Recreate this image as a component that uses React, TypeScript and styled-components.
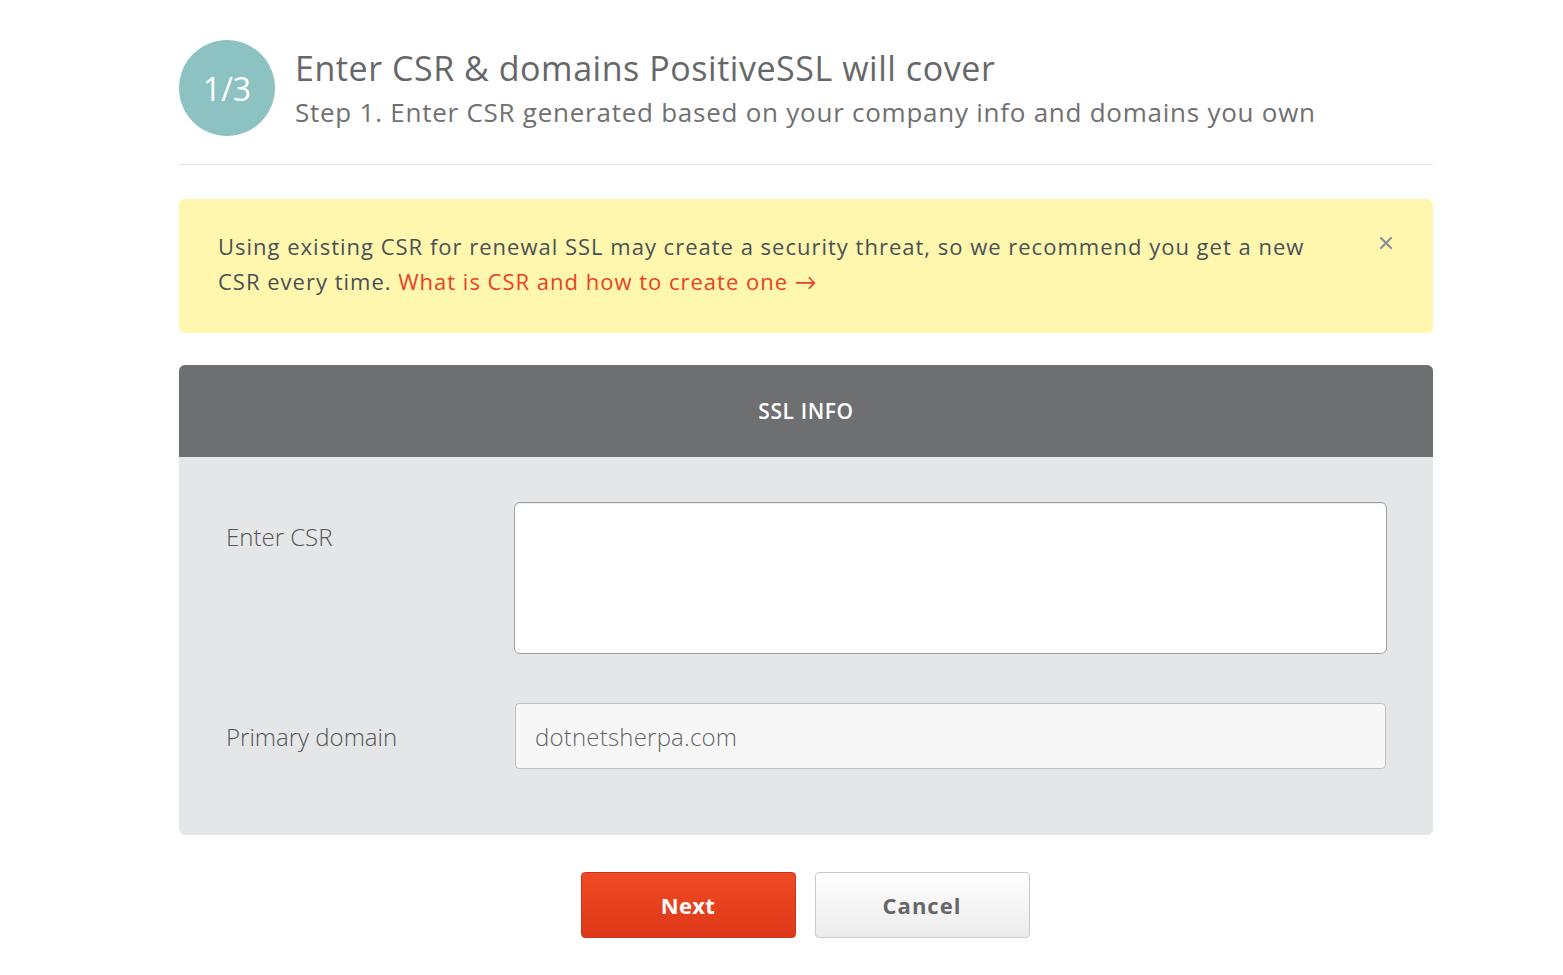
import React from "react";
import styled, { createGlobalStyle } from "styled-components";

const Global = createGlobalStyle`
  html, body { margin: 0; padding: 0; background: #fff; }
  body { font-family: "Open Sans", Lato, sans-serif; color: #666; }
  * { box-sizing: border-box; }
`;

const Page = styled.div`
  width: 1254px;
  margin: 0 0 0 179px;
  padding-top: 40px;
`;

const Header = styled.header`
  display: flex;
  align-items: center;
  gap: 20px;
  padding-bottom: 28px;
  border-bottom: 1px solid #e6e6e6;
`;

const StepCircle = styled.div`
  width: 96px;
  height: 96px;
  border-radius: 50%;
  background: #8cc2c2;
  color: #fff;
  display: flex;
  align-items: center;
  justify-content: center;
  font-size: 32px;
  flex-shrink: 0;
`;

const HeadText = styled.div`
  display: flex;
  flex-direction: column;
`;

const Title = styled.h1`
  margin: 0;
  font-size: 34px;
  font-weight: 400;
  color: #666769;
  line-height: 42px;
  letter-spacing: 0.55px;
`;

const Subtitle = styled.p`
  margin: 6px 0 0;
  font-size: 26px;
  font-weight: 400;
  color: #707070;
  line-height: 34px;
  letter-spacing: 0.75px;
`;

const Alert = styled.div`
  position: relative;
  margin-top: 34px;
  background: #fef7ad;
  border-radius: 6px;
  padding: 30px 120px 34px 39px;
  font-size: 22px;
  line-height: 35px;
  letter-spacing: 1px;
  color: #4b5057;
`;

const AlertLink = styled.a`
  color: #ea4124;
  text-decoration: none;
`;

const Close = styled.button`
  position: absolute;
  top: 36px;
  right: 39px;
  border: 0;
  background: none;
  padding: 0;
  width: 16px;
  height: 16px;
  cursor: pointer;
  display: flex;
`;

const Panel = styled.section`
  margin-top: 32px;
  border-radius: 6px;
  overflow: hidden;
  background: #e5e6e8;
`;

const PanelHead = styled.div`
  height: 92px;
  background: #6e6f71;
  color: #fff;
  display: flex;
  align-items: center;
  justify-content: center;
  font-size: 21px;
  font-weight: 600;
  letter-spacing: 0.6px;
`;

const PanelBody = styled.div`
  padding: 45px 46px 66px 47px;
  display: flex;
  flex-direction: column;
  gap: 49px;
`;

const Row = styled.div<{ $center?: boolean }>`
  display: grid;
  grid-template-columns: 288px 1fr;
  align-items: ${(p) => (p.$center ? "center" : "start")};
`;

const Label = styled.label<{ $top?: number }>`
  font-size: 24px;
  font-weight: 300;
  color: #555;
  padding-top: ${(p) => p.$top ?? 0}px;
`;

const TextArea = styled.textarea`
  width: 100%;
  height: 152px;
  border: 1px solid #9fa0a2;
  border-radius: 6px;
  background: #fff;
  resize: none;
  outline: none;
  font-size: 20px;
  padding: 12px 20px;
  box-shadow: inset 0 1px 1px rgba(0, 0, 0, 0.08);
`;

const Input = styled.input`
  width: calc(100% - 2px);
  margin-left: 1px;
  height: 66px;
  border: 1px solid #bfc0c2;
  border-radius: 4px;
  background: #f7f7f7;
  padding: 0 19px;
  font-family: "Open Sans", Lato, sans-serif;
  font-weight: 300;
  font-size: 24px;
  letter-spacing: 0.2px;
  color: #666;
  outline: none;
`;

const Actions = styled.div`
  display: flex;
  justify-content: center;
  gap: 19px;
  margin-top: 37px;
  padding-right: 2px;
`;

const Button = styled.button<{ $primary?: boolean }>`
  width: 215px;
  height: 66px;
  border-radius: 4px;
  font-family: "Open Sans", sans-serif;
  font-size: 22px;
  font-weight: 700;
  letter-spacing: ${(p) => (p.$primary ? "0.3px" : "1px")};
  cursor: pointer;
  border: 1px solid ${(p) => (p.$primary ? "#c9341a" : "#c8c8c8")};
  color: ${(p) => (p.$primary ? "#fff" : "#666769")};
  background: ${(p) =>
    p.$primary
      ? "linear-gradient(#f04a24, #de3919)"
      : "linear-gradient(#ffffff, #ececec)"};
`;

export default function App() {
  return (
    <>
      <Global />
      <Page>
        <Header>
          <StepCircle>1/3</StepCircle>
          <HeadText>
            <Title>Enter CSR &amp; domains PositiveSSL will cover</Title>
            <Subtitle>
              Step 1. Enter CSR generated based on your company info and domains you own
            </Subtitle>
          </HeadText>
        </Header>
        <Alert>
          Using existing CSR for renewal SSL may create a security threat, so we recommend you get a new
          CSR every time.{" "}
          <AlertLink href="#">What is CSR and how to create one →</AlertLink>
          <Close aria-label="Close">
            <svg width="16" height="16" viewBox="0 0 16 16">
              <path d="M3 3 L13 13 M13 3 L3 13" stroke="#8a9099" strokeWidth="2.2" strokeLinecap="round" />
            </svg>
          </Close>
        </Alert>
        <Panel>
          <PanelHead>SSL INFO</PanelHead>
          <PanelBody>
            <Row>
              <Label $top={18}>Enter CSR</Label>
              <TextArea />
            </Row>
            <Row $center>
              <Label>Primary domain</Label>
              <Input defaultValue="dotnetsherpa.com" />
            </Row>
          </PanelBody>
        </Panel>
        <Actions>
          <Button $primary>Next</Button>
          <Button>Cancel</Button>
        </Actions>
      </Page>
    </>
  );
}
